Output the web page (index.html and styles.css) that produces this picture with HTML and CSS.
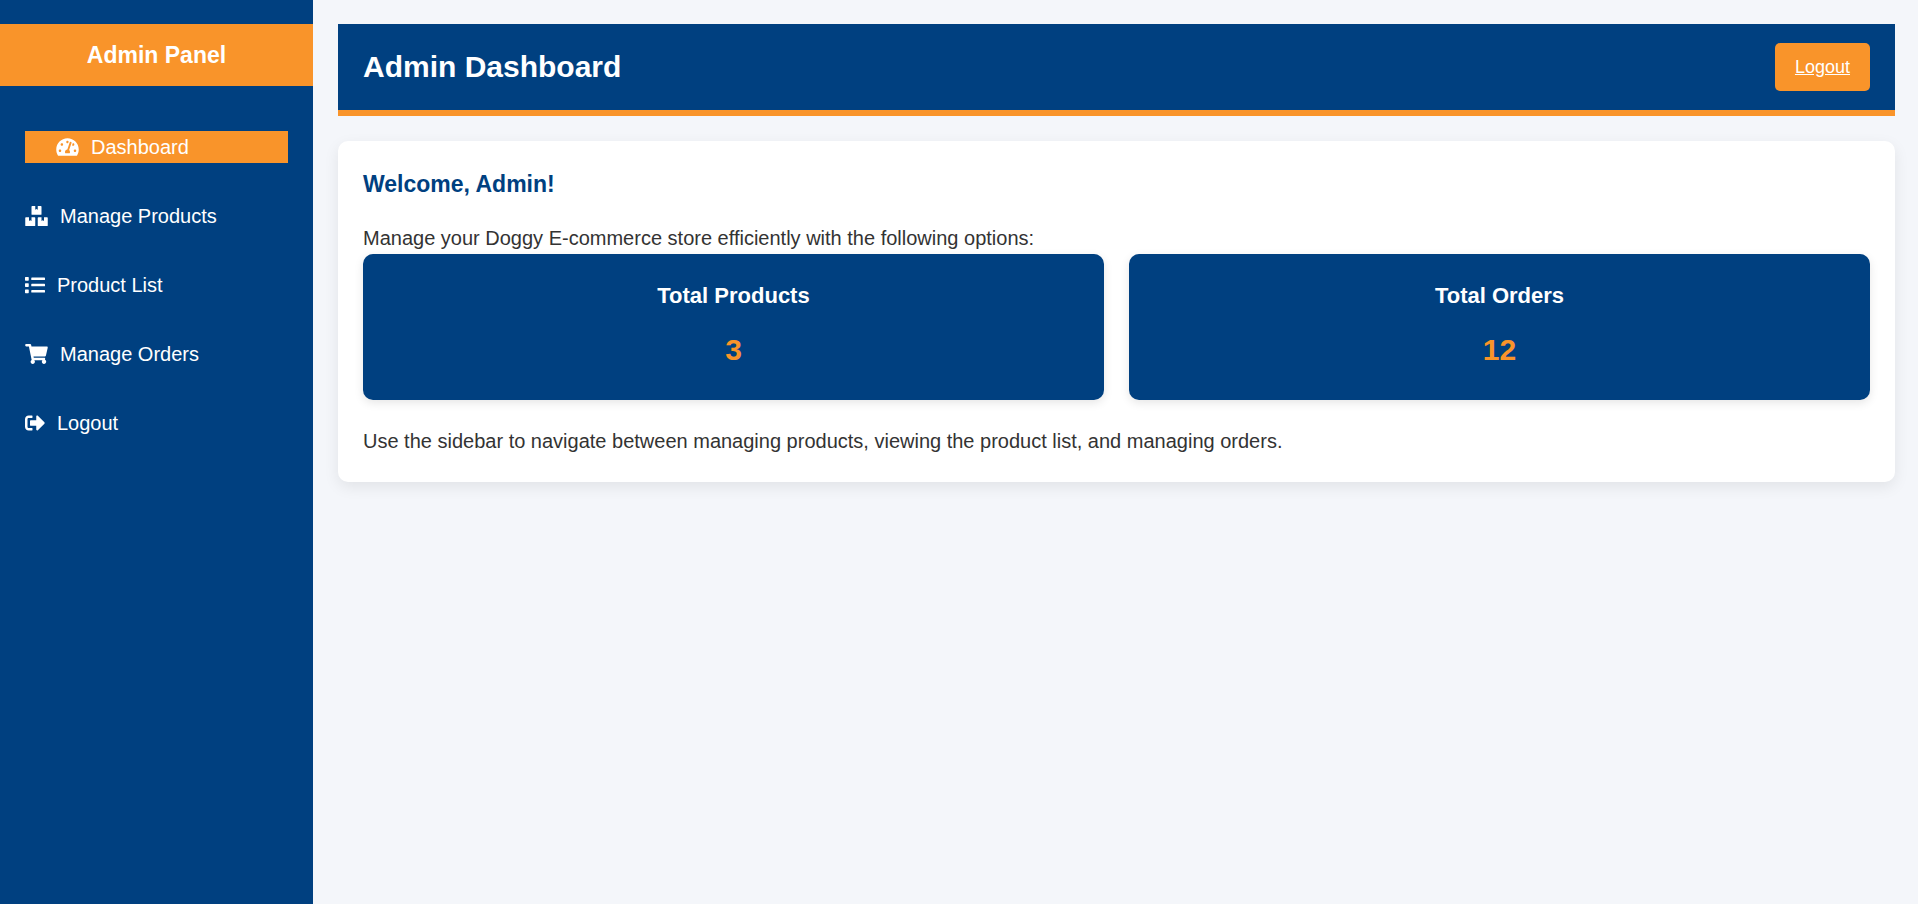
FILE: index.html
```html
<!DOCTYPE html>
<html lang="en">
<head>
<meta charset="utf-8">
<title>Admin Dashboard</title>
<link rel="stylesheet" href="styles.css">
</head>
<body>
<aside class="sidebar">
  <h2 class="brand">Admin Panel</h2>
  <nav>
    <ul class="menu">
      <li><a class="menu-link active" href="#" aria-current="page">
        <svg class="icon icon-wide" viewBox="0 0 576 512" aria-hidden="true"><path d="M288 32C128.94 32 0 160.94 0 320c0 52.8 14.25 102.26 39.06 144.8 5.61 9.62 16.3 15.2 27.44 15.2h443c11.14 0 21.83-5.58 27.44-15.2C561.75 422.26 576 372.8 576 320c0-159.06-128.94-288-288-288zm0 64c14.71 0 26.58 10.13 30.32 23.65-1.11 2.26-2.64 4.23-3.45 6.67l-9.22 27.67c-5.13 3.49-10.97 6.01-17.64 6.01-17.67 0-32-14.33-32-32S270.33 96 288 96zM96 384c-17.67 0-32-14.33-32-32s14.33-32 32-32 32 14.33 32 32-14.33 32-32 32zm48-160c-17.67 0-32-14.33-32-32s14.33-32 32-32 32 14.33 32 32-14.33 32-32 32zm246.77-72.41l-61.33 184C343.13 347.33 352 364.54 352 384c0 11.72-3.38 22.55-8.88 32H232.88c-5.5-9.45-8.88-20.28-8.88-32 0-33.94 26.5-61.43 59.9-63.59l61.34-184.01c4.17-12.56 17.73-19.45 30.36-15.17 12.57 4.19 19.35 17.79 15.17 30.36zm14.66 57.2l15.52-46.55c3.47-1.29 7.13-2.23 11.05-2.23 17.67 0 32 14.33 32 32s-14.33 32-32 32c-11.38-.01-20.89-6.28-26.57-15.22zM480 384c-17.67 0-32-14.33-32-32s14.33-32 32-32 32 14.33 32 32-14.33 32-32 32z"/></svg>
        Dashboard</a></li>
      <li><a class="menu-link" href="#">
        <svg class="icon icon-wide" viewBox="0 0 576 512" aria-hidden="true"><path d="M560 288h-80v96l-32-21.3-32 21.3v-96h-80c-8.8 0-16 7.2-16 16v192c0 8.8 7.2 16 16 16h224c8.8 0 16-7.2 16-16V304c0-8.8-7.2-16-16-16zm-384-64h224c8.8 0 16-7.2 16-16V16c0-8.8-7.2-16-16-16h-80v96l-32-21.3L256 96V0h-80c-8.8 0-16 7.2-16 16v192c0 8.8 7.2 16 16 16zm64 64h-80v96l-32-21.3L96 384v-96H16c-8.8 0-16 7.2-16 16v192c0 8.8 7.2 16 16 16h224c8.8 0 16-7.2 16-16V304c0-8.8-7.2-16-16-16z"/></svg>
        Manage Products</a></li>
      <li><a class="menu-link" href="#">
        <svg class="icon" viewBox="0 0 512 512" aria-hidden="true"><path d="M80 368H16a16 16 0 0 0-16 16v64a16 16 0 0 0 16 16h64a16 16 0 0 0 16-16v-64a16 16 0 0 0-16-16zm0-320H16A16 16 0 0 0 0 64v64a16 16 0 0 0 16 16h64a16 16 0 0 0 16-16V64a16 16 0 0 0-16-16zm0 160H16a16 16 0 0 0-16 16v64a16 16 0 0 0 16 16h64a16 16 0 0 0 16-16v-64a16 16 0 0 0-16-16zm416 176H176a16 16 0 0 0-16 16v32a16 16 0 0 0 16 16h320a16 16 0 0 0 16-16v-32a16 16 0 0 0-16-16zm0-320H176a16 16 0 0 0-16 16v32a16 16 0 0 0 16 16h320a16 16 0 0 0 16-16V80a16 16 0 0 0-16-16zm0 160H176a16 16 0 0 0-16 16v32a16 16 0 0 0 16 16h320a16 16 0 0 0 16-16v-32a16 16 0 0 0-16-16z"/></svg>
        Product List</a></li>
      <li><a class="menu-link" href="#">
        <svg class="icon icon-wide" viewBox="0 0 576 512" aria-hidden="true"><path d="M528.12 301.319l47.273-208C578.806 78.301 567.391 64 551.99 64H159.208l-9.166-44.81C147.758 8.021 137.93 0 126.529 0H24C10.745 0 0 10.745 0 24v16c0 13.255 10.745 24 24 24h69.883l70.248 343.435C147.325 417.1 136 435.222 136 456c0 30.928 25.072 56 56 56s56-25.072 56-56c0-15.674-6.447-29.835-16.824-40h209.647C430.447 426.165 424 440.326 424 456c0 30.928 25.072 56 56 56s56-25.072 56-56c0-22.172-12.888-41.332-31.579-50.405l5.517-24.276c3.413-15.018-8.002-29.319-23.403-29.319H218.117l-6.545-32h293.145c11.206 0 20.92-7.754 23.403-18.681z"/></svg>
        Manage Orders</a></li>
      <li><a class="menu-link" href="#">
        <svg class="icon" viewBox="0 0 512 512" aria-hidden="true"><path d="M497 273L329 441c-15 15-41 4.500-41-17v-96H152c-13.300 0-24-10.700-24-24v-96c0-13.300 10.700-24 24-24h136V88c0-21.400 25.900-32 41-17l168 168c9.300 9.400 9.300 24.600 0 34zM192 436v-40c0-6.600-5.400-12-12-12H96c-17.700 0-32-14.300-32-32V160c0-17.700 14.300-32 32-32h84c6.600 0 12-5.400 12-12V76c0-6.600-5.400-12-12-12H96c-53 0-96 43-96 96v192c0 53 43 96 96 96h84c6.600 0 12-5.400 12-12z"/></svg>
        Logout</a></li>
    </ul>
  </nav>
</aside>
<main class="main">
  <header class="topbar">
    <h1 class="page-title">Admin Dashboard</h1>
    <a class="logout" href="#">Logout</a>
  </header>
  <section class="panel">
    <h2 class="welcome">Welcome, Admin!</h2>
    <p class="text">Manage your Doggy E-commerce store efficiently with the following options:</p>
    <div class="stats">
      <article class="stat">
        <h3 class="stat-title">Total Products</h3>
        <p class="stat-value">3</p>
      </article>
      <article class="stat">
        <h3 class="stat-title">Total Orders</h3>
        <p class="stat-value">12</p>
      </article>
    </div>
    <p class="text">Use the sidebar to navigate between managing products, viewing the product list, and managing orders.</p>
  </section>
</main>
</body>
</html>
```
FILE: styles.css
```css
* {
  box-sizing: border-box;
  margin: 0;
  padding: 0;
}

body {
  display: flex;
  min-height: 100vh;
  background: #f4f6fa;
  color: #333;
  font-family: "Liberation Sans", Arial, sans-serif;
  font-size: 20px;
  line-height: 32px;
}

.sidebar {
  flex: 0 0 313px;
  padding-top: 24px;
  background: #004080;
  color: #fff;
}

.brand {
  padding: 12px 25px;
  background: #f9942a;
  font-size: 23px;
  line-height: 38px;
  text-align: center;
}

.menu {
  display: flex;
  flex-direction: column;
  gap: 37px;
  padding: 45px 25px;
  list-style: none;
}

.menu-link {
  display: flex;
  align-items: center;
  gap: 12px;
  color: #fff;
  text-decoration: none;
}

.menu-link.active {
  padding-left: 31px;
  background: #f9942a;
}

.icon {
  width: 20px;
  height: 20px;
  fill: currentColor;
}

.icon-wide {
  width: 23px;
}

.main {
  flex: 1;
  min-width: 0;
  padding: 24px 23px 24px 25px;
}

.topbar {
  display: flex;
  align-items: center;
  justify-content: space-between;
  padding: 19px 25px;
  background: #004080;
  border-bottom: 6px solid #f9942a;
  color: #fff;
}

.page-title {
  font-size: 30px;
  line-height: 48px;
}

.logout {
  padding: 8px 20px;
  border-radius: 5px;
  background: #f9942a;
  color: #fff;
  font-size: 18px;
}

.panel {
  margin-top: 25px;
  padding: 25px;
  border-radius: 10px;
  background: #fff;
  box-shadow: 0 5px 15px rgba(0, 0, 0, 0.08);
}

.welcome {
  margin-bottom: 19px;
  color: #004080;
  font-size: 23px;
  line-height: 37px;
}

.stats {
  display: grid;
  grid-template-columns: repeat(auto-fit, minmax(250px, 1fr));
  gap: 25px;
  margin-bottom: 25px;
}

.stat {
  padding: 24px 25px 26px;
  border-radius: 10px;
  background: #004080;
  box-shadow: 0 3px 10px rgba(0, 0, 0, 0.1);
  color: #fff;
  text-align: center;
}

.stat-title {
  margin-bottom: 12px;
  font-size: 22px;
  line-height: 36px;
}

.stat-value {
  color: #f9942a;
  font-size: 30px;
  font-weight: bold;
  line-height: 48px;
}
```
